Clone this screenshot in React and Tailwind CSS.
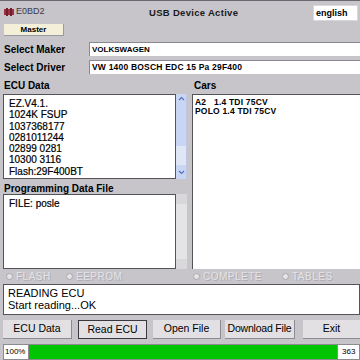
export default function App() {
  const ecu = ["EZ.V4.1.", "1024K FSUP", "1037368177", "0281011244", "02899 0281", "10300 3116", "Flash:29F400BT"];
  return (
    <div className="w-[360px] h-[360px] overflow-hidden bg-[#c7c5ca] text-black flex flex-col" style={{ fontFamily: '"Liberation Sans", Arial, sans-serif' }}>
      {/* title row */}
      <div className="h-[22px] flex items-center relative border-t border-[#6a6870]">
        <div className="flex items-center gap-[2px] pl-[4px] text-[9px] text-[#3a3a4a]">
          <svg width="10" height="8" viewBox="0 0 10 8"><rect x="0" y="1" width="10" height="6" fill="#a03040"/><rect x="2" y="0" width="2" height="8" fill="#702030"/><rect x="6" y="0" width="2" height="8" fill="#702030"/></svg>
          <span>E0BD2</span>
        </div>
        <div className="absolute left-[149px] top-[5px] text-[9.5px] font-bold tracking-[0.3px] text-[#1a1a1a]">USB Device Active</div>
        <div className="ml-auto mr-[2px] mt-[3px] w-[45px] h-[16px] bg-white border border-[#d8d8dc] text-[9px] font-bold pl-[2px] leading-[14px]">english</div>
      </div>
      {/* master */}
      <div className="h-[16px] pl-[4px] pt-[2px]">
        <div className="w-[60px] h-[12px] bg-[#f3efd8] border-b border-r border-[#9a98a0] text-[8px] font-bold text-center leading-[12px]">Master</div>
      </div>
      {/* select rows */}
      <div className="h-[19px] flex items-center pt-[3px]">
        <div className="w-[89px] pl-[4px] text-[10px] font-bold">Select Maker</div>
        <div className="flex-1 h-[14px] bg-white border-t border-l border-[#8a8890] text-[8px] font-bold pl-[2px] leading-[13px]">VOLKSWAGEN</div>
      </div>
      <div className="h-[19px] flex items-center pt-[1px]">
        <div className="w-[89px] pl-[4px] text-[10px] font-bold">Select Driver</div>
        <div className="flex-1 h-[14px] bg-white border-t border-l border-[#8a8890] text-[8.5px] font-bold pl-[2px] leading-[13px] tracking-[0.2px]">VW 1400 BOSCH EDC 15 Pa 29F400</div>
      </div>
      {/* main area */}
      <div className="flex mt-[4px]">
        <div className="w-[188px] flex flex-col pl-[3px]">
          <div className="h-[14px] text-[10px] font-bold leading-[12px] pl-[1px]">ECU Data</div>
          <div className="flex h-[85px]">
            <div className="w-[173px] bg-white border border-[#55535a] text-[10px] leading-[11.3px] pl-[5px] pt-[3px] [-webkit-text-stroke:0.2px_#000]">
              {ecu.map((t) => <div key={t}>{t}</div>)}
            </div>
            <div className="w-[11px] bg-[#dfe6f5] border-r border-[#c0c8e0] flex flex-col items-center justify-between">
              <div className="w-full h-[52px] bg-[#c8d6f4] flex justify-center pt-[2px]">
                <svg width="7" height="5" viewBox="0 0 7 5"><path d="M1 4 L3.5 1.5 L6 4" stroke="#5070c0" strokeWidth="1.2" fill="none"/></svg>
              </div>
              <div className="w-full h-[14px] bg-[#c8d6f4] flex justify-center items-center">
                <svg width="7" height="5" viewBox="0 0 7 5"><path d="M1 1 L3.5 3.5 L6 1" stroke="#5070c0" strokeWidth="1.2" fill="none"/></svg>
              </div>
            </div>
          </div>
          <div className="h-[15px] text-[10px] font-bold leading-[13px] pt-[3px] pl-[1px]">Programming Data File</div>
          <div className="flex h-[75px]">
            <div className="w-[173px] bg-white border border-[#55535a] text-[10px] leading-[12px] pl-[5px] pt-[3px] [-webkit-text-stroke:0.2px_#000]">FILE: posle</div>
            <div className="w-[11px] bg-[#e4e3e6] flex flex-col justify-between">
              <div className="h-[10px] bg-[#d8d7da]"></div>
              <div className="h-[10px] bg-[#d8d7da]"></div>
            </div>
          </div>
        </div>
        <div className="flex-1 flex flex-col pl-[4px]">
          <div className="h-[14px] text-[10px] font-bold leading-[12px] pl-[2px]">Cars</div>
          <div className="h-[175px] bg-white border-t border-l border-[#55535a] text-[8.5px] font-bold leading-[9px] pl-[2px] pt-[3px] tracking-[0.2px]">
            <div className="whitespace-pre">A2   1.4 TDI 75CV</div>
            <div>POLO 1.4 TDI 75CV</div>
          </div>
        </div>
      </div>
      {/* radios */}
      <div className="h-[14px] relative text-[10px] text-[#e4e3e6] tracking-[0.5px] [text-shadow:1px_1px_0_#aeacb2]">
        {[["FLASH", 6], ["EEPROM", 66], ["COMPLETE", 193], ["TABLES", 282]].map(([t, x]) => (
          <div key={t} className="absolute top-[0px] flex items-center gap-[3px]" style={{ left: x }}>
            <span className="w-[7px] h-[7px] rounded-full bg-[#e4e3e6] border border-[#aaa8ae]"></span>
            <span>{t}</span>
          </div>
        ))}
      </div>
      {/* status */}
      <div className="ml-[3px] mt-[1px] h-[31px] bg-white border border-[#55535a] text-[11px] leading-[12px] pl-[4px] pt-[2px]">
        <div>READING ECU</div>
        <div>Start reading...OK</div>
      </div>
      {/* buttons */}
      <div className="flex h-[19px] mt-[5px] text-[10.5px] leading-[17px] whitespace-nowrap">
        <div className="ml-[3px] w-[69px] bg-[#e2e0e3] border-r border-b border-[#8d8b92] text-center">ECU Data</div>
        <div className="ml-[6px] w-[69px] bg-[#e2e0e3] border border-[#3a383e] text-center">Read ECU</div>
        <div className="ml-[6px] w-[68px] bg-[#e2e0e3] border-r border-b border-[#8d8b92] text-center">Open File</div>
        <div className="ml-[4px] w-[70px] bg-[#e2e0e3] border-r border-b border-[#8d8b92] text-center tracking-[-0.2px]">Download File</div>
        <div className="ml-[8px] flex-1 bg-[#e2e0e3] border-b border-[#8d8b92] text-center">Exit</div>
      </div>
      {/* progress */}
      <div className="flex h-[16px] mt-[5px] text-[8px] leading-[14px]">
        <div className="ml-[3px] w-[26px] bg-white border border-[#8d8b92] pl-[1px]">100%</div>
        <div className="w-[308px] bg-[#00c400] border-y border-[#8d8b92]"></div>
        <div className="flex-1 bg-white border border-[#8d8b92] pl-[4px]">363</div>
      </div>
    </div>
  );
}
